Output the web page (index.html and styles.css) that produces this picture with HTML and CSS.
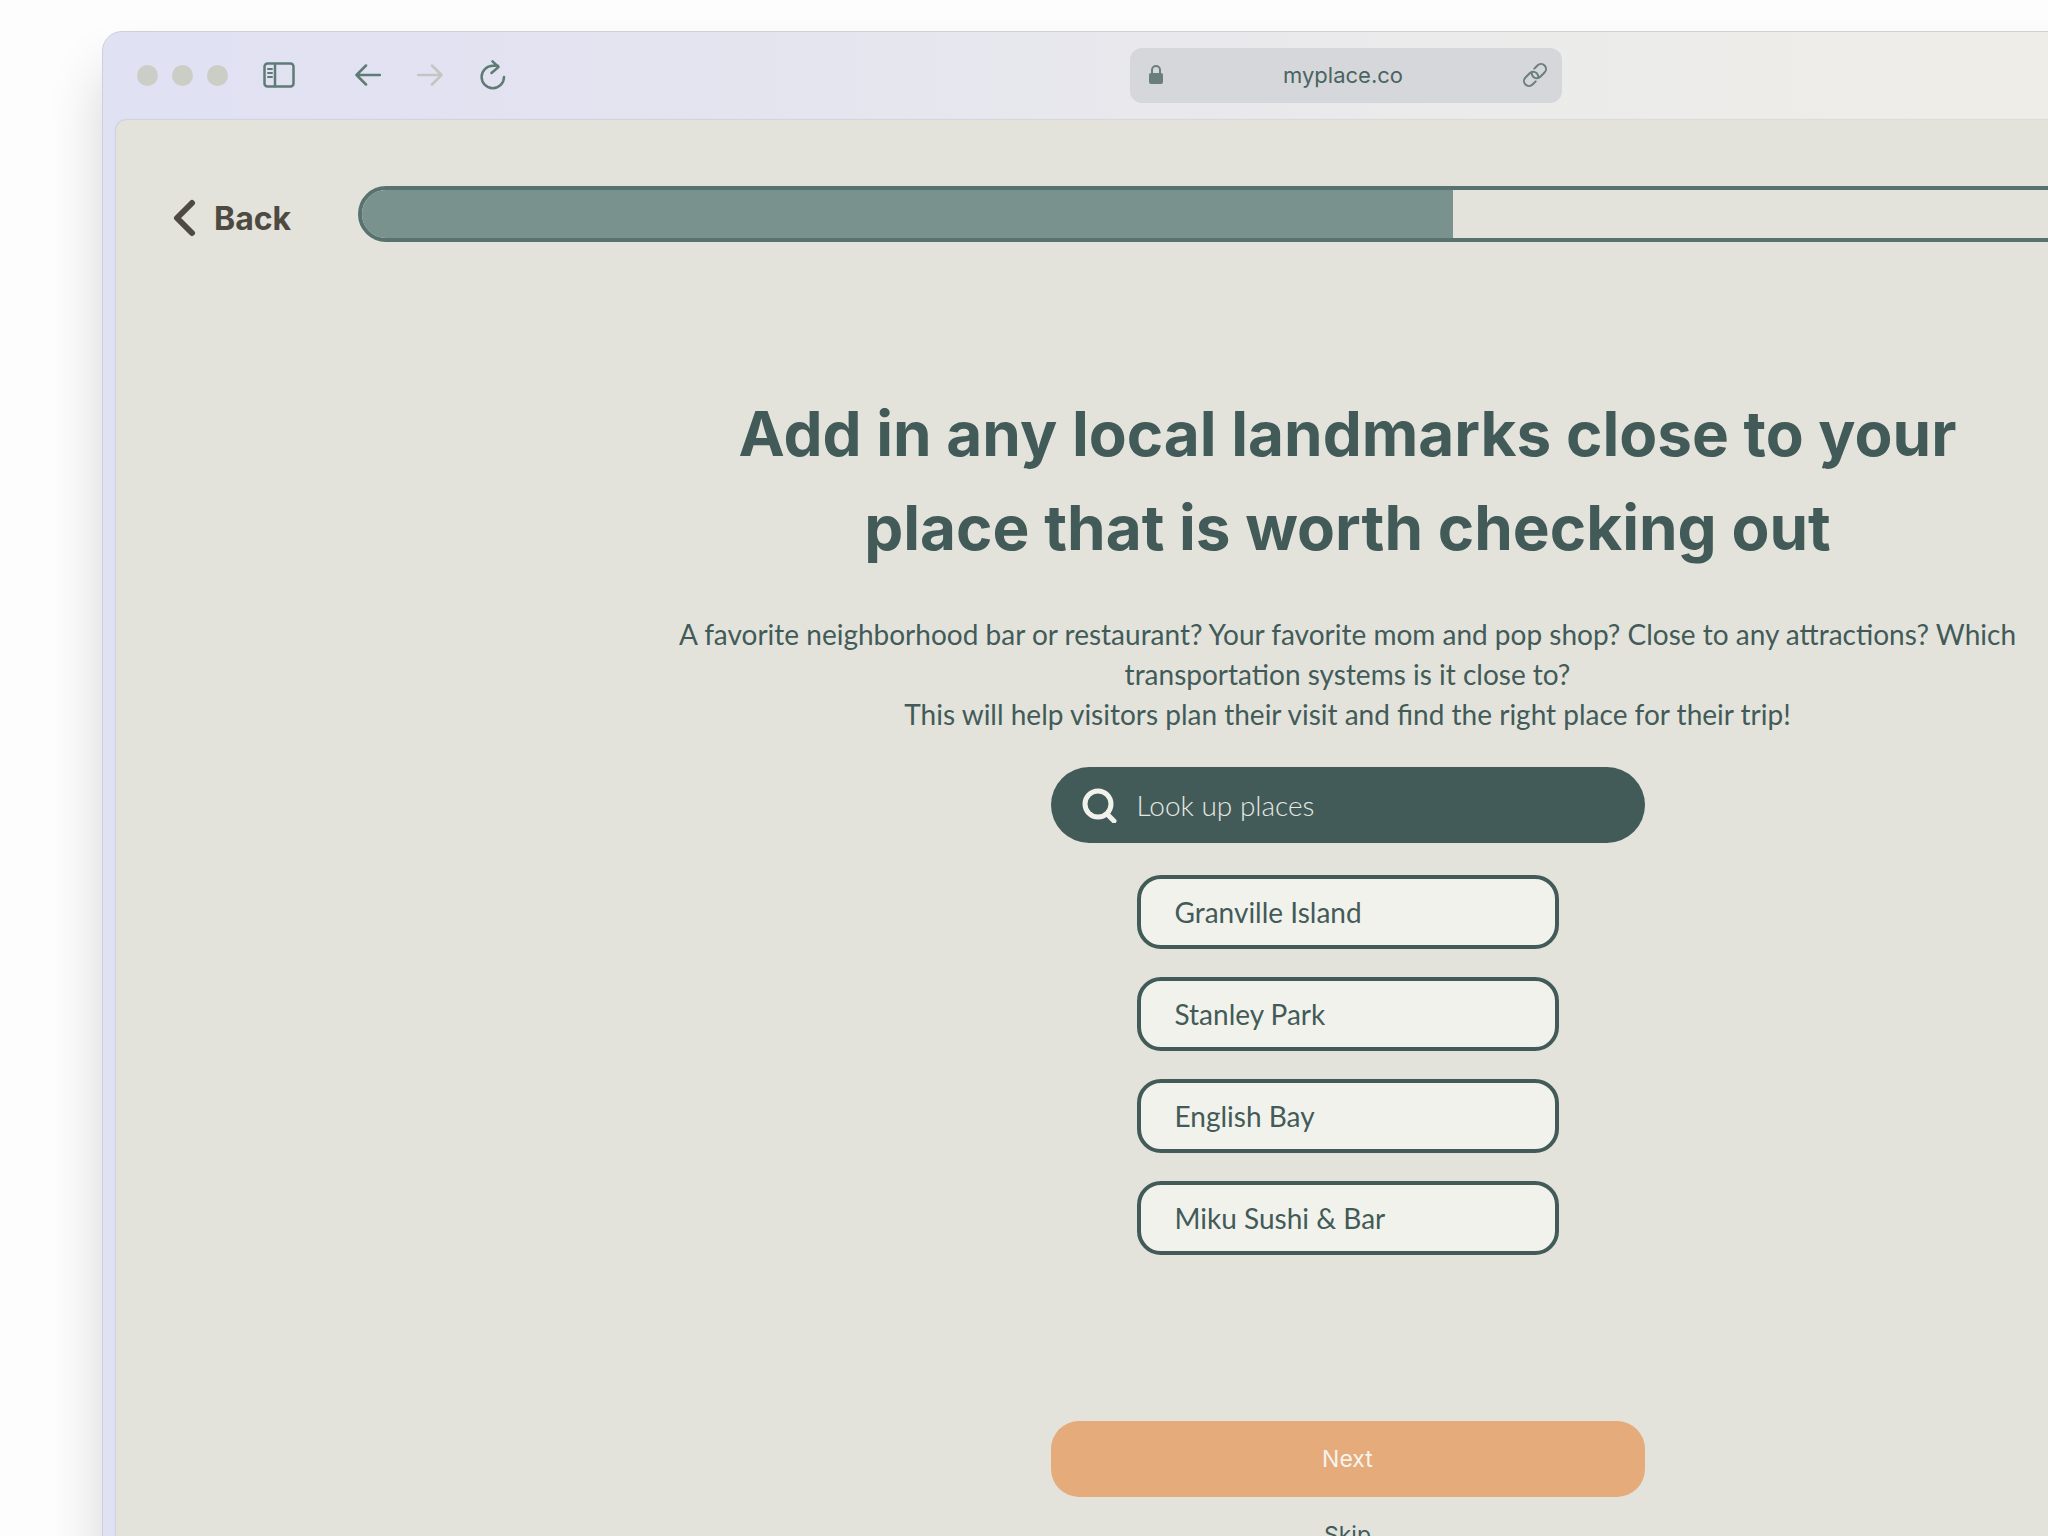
FILE: index.html
```
<!DOCTYPE html>
<html lang="en">
<head>
    <meta charset="UTF-8">
    <meta name="viewport" content="width=device-width, initial-scale=1.0">
    <title>MyPlace - Local landmarks</title>
    <link rel="stylesheet" href="styles.css">
</head>
<body>
    <div class="browser">
        <!-- Browser toolbar -->
        <header class="toolbar">
            <div class="toolbar-left">
                <div class="dots">
                    <span class="dot"></span>
                    <span class="dot"></span>
                    <span class="dot"></span>
                </div>
                <button class="tool-btn sidebar-btn" aria-label="Toggle sidebar">
                    <svg width="32" height="26" viewBox="0 0 32 26" stroke-width="2.5">
                        <rect x="1.500" y="1.500" width="29" height="23" rx="3"/>
                        <path d="M12 2v22"/>
                        <path d="M5 7h4M5 11h4M5 15h4" stroke-width="2"/>
                    </svg>
                </button>
                <button class="tool-btn prev-btn" aria-label="Go back">
                    <svg width="26" height="22" viewBox="0 0 26 22" stroke-width="2.5">
                        <path d="M25 11H1.500M11 1.500L1.500 11l9.500 9.500"/>
                    </svg>
                </button>
                <button class="tool-btn next-page-btn" aria-label="Go forward" disabled>
                    <svg width="26" height="22" viewBox="0 0 26 22" stroke-width="2.5">
                        <path d="M1 11h23.500M15 1.500l9.500 9.500-9.500 9.500"/>
                    </svg>
                </button>
                <button class="tool-btn reload-btn" aria-label="Reload">
                    <svg width="26" height="30" viewBox="0 0 26 30" stroke-width="2.5">
                        <path d="M24 17a11.200 11.200 0 1 1-11.200-11.200H18M12.500 1.300l6 5.700-7 6"/>
                    </svg>
                </button>
            </div>
            <div class="url-bar">
                <svg class="lock" width="14" height="20" viewBox="0 0 14 20">
                    <rect x="0" y="8" width="14" height="11" rx="2" fill="currentColor"/>
                    <path d="M3 9V5a4 4 0 0 1 8 0v4" fill="none" stroke="currentColor" stroke-width="2"/>
                </svg>
                <input class="url-input" type="text" value="myplace.co" aria-label="Address">
                <svg class="link" width="22" height="22" viewBox="0 0 22 22">
                    <g transform="rotate(-45 11 11)">
                        <path d="M7 16H2.500a5 5 0 0 1 0-10h6a5 5 0 0 1 4.500 7.200a5 5 0 0 1-2 2.200"/>
                        <path d="M15 6h4.500a5 5 0 0 1 0 10h-6a5 5 0 0 1-4.500-7.200a5 5 0 0 1 2-2.200"/>
                    </g>
                </svg>
            </div>
        </header>

        <main class="page">
            <div class="top-row">
                <button class="back-btn">
                    <svg width="24" height="38" viewBox="0 0 24 38">
                        <path d="M20 4L5 19l15 15"/>
                    </svg>
                    Back
                </button>
                <progress class="progress" value="50" max="100" aria-label="Setup progress"></progress>
            </div>

            <h1>Add in any local landmarks close to your<br>place that is worth checking out</h1>
            <p class="intro">
                A favorite neighborhood bar or restaurant? Your favorite mom and pop shop? Close to any attractions? Which<br>
                transportation systems is it close to?<br>
                This will help visitors plan their visit and find the right place for their trip!
            </p>

            <form class="landmarks">
                <label class="search">
                    <svg width="36" height="36" viewBox="0 0 36 36">
                        <circle cx="17" cy="17" r="13"/>
                        <path d="M26 27l7 7"/>
                    </svg>
                    <input type="text" placeholder="Look up places" aria-label="Look up places">
                </label>
                <div class="places">
                    <button type="button" class="place">Granville Island</button>
                    <button type="button" class="place">Stanley Park</button>
                    <button type="button" class="place">English Bay</button>
                    <button type="button" class="place">Miku Sushi &amp; Bar</button>
                </div>
                <button type="button" class="next-btn">Next</button>
                <a class="skip" href="#">Skip</a>
            </form>
        </main>
    </div>
</body>
</html>
```
FILE: styles.css
```
* {
    box-sizing: border-box;
}
body {
    margin: 0;
    height: 100vh;
    overflow: hidden;
    display: flex;
    background: #fdfdfd;
    font-family: Lato, "Open Sans", sans-serif;
    color: #425b58;
}
button, input {
    font-family: inherit;
    color: inherit;
}
button {
    cursor: pointer;
}
h1, .back-btn, .url-input, .next-btn, .skip {
    font-family: Inter, "Liberation Sans", sans-serif;
}

/* The window runs off the right and bottom edges */
.browser {
    flex: 1;
    margin: 31px -532px -60px 102px;
    padding-left: 13px;
    border: 1px solid #cfd0d2;
    border-radius: 20px;
    background: linear-gradient(90deg, #e0e1f3 0, #e2e2f1 16%, #ebebeb 55%, #eeede8 75%);
    box-shadow: 0 40px 56px rgba(0, 0, 0, 0.16);
    display: flex;
    flex-direction: column;
}

/* Toolbar */
.toolbar {
    height: 88px;
    display: grid;
    grid-template-columns: 1fr 432px 1fr;
    align-items: center;
    padding: 0 4px 2px 0;
}
.toolbar-left {
    display: flex;
    align-items: center;
    padding-left: 21px;
}
.dots {
    display: flex;
    gap: 14px;
}
.dot {
    width: 21px;
    height: 21px;
    border-radius: 50%;
    background: #cbcdc7;
}
.tool-btn {
    display: flex;
    padding: 0;
    border: none;
    background: none;
    color: #5f7b75;
}
.tool-btn svg {
    fill: none;
    stroke: currentColor;
    stroke-linecap: round;
    stroke-linejoin: round;
}
.tool-btn:disabled {
    color: #c3c5c1;
}
.sidebar-btn {
    margin-left: 35px;
}
.prev-btn {
    margin-left: 60px;
}
.next-page-btn {
    margin-left: 36px;
}
.reload-btn {
    margin-left: 37px;
}
.url-bar {
    height: 55px;
    display: flex;
    align-items: center;
    padding: 0 16px 0 19px;
    border-radius: 12px;
    background: #d6d7da;
    color: #6a7f79;
}
.url-input {
    flex: 1;
    min-width: 0;
    padding: 0;
    border: none;
    outline: none;
    background: none;
    text-align: center;
    font-size: 22px;
    color: #4a645f;
}
.link {
    overflow: visible;
    fill: none;
    stroke: currentColor;
    stroke-width: 2;
    stroke-linecap: round;
}

/* Page */
.page {
    flex: 1;
    padding-top: 66px;
    border-radius: 10px 0 0 0;
    background: #e3e3dc;
    box-shadow: 0 0 2px rgba(0, 0, 0, 0.25);
    text-align: center;
}
.top-row {
    display: flex;
    align-items: center;
    padding: 0 32px 0 56px;
}
.back-btn {
    display: flex;
    align-items: center;
    gap: 18px;
    width: 186px;
    padding: 8px 0 0;
    border: none;
    background: none;
    font-size: 32px;
    font-weight: 700;
    color: #4f4a41;
}
.back-btn svg {
    fill: none;
    stroke: currentColor;
    stroke-width: 6;
    stroke-linecap: round;
    stroke-linejoin: round;
}
.progress {
    flex: 1;
    height: 56px;
    appearance: none;
    border: 4px solid #587270;
    border-radius: 28px;
    overflow: hidden;
    background: none;
}
.progress::-webkit-progress-bar {
    background: none;
}
.progress::-webkit-progress-value {
    background: #7a928e;
}
h1 {
    margin: 145px 0 0;
    font-size: 62px;
    line-height: 94px;
    font-weight: 700;
}
.intro {
    margin: 39px 0 33px;
    font-size: 28px;
    line-height: 40px;
}

/* Search and places */
.landmarks {
    display: flex;
    flex-direction: column;
    align-items: center;
}
.search {
    display: flex;
    align-items: center;
    gap: 20px;
    width: 594px;
    height: 76px;
    padding: 0 30px;
    border-radius: 38px;
    background: #425b58;
    color: #f2f2ec;
}
.search svg {
    fill: none;
    stroke: currentColor;
    stroke-width: 5;
    stroke-linecap: round;
}
.search input {
    flex: 1;
    min-width: 0;
    padding: 0;
    border: none;
    outline: none;
    background: none;
    font-size: 28px;
    font-weight: 300;
}
.search input::placeholder {
    color: #e6e8e3;
}
.places {
    display: flex;
    flex-direction: column;
    gap: 28px;
    width: 422px;
    margin: 32px 0 166px;
}
.place {
    height: 74px;
    padding: 0 34px;
    border: 4px solid #425b58;
    border-radius: 24px;
    background: #f2f2ec;
    font-size: 28px;
    text-align: left;
}
.next-btn {
    width: 594px;
    height: 76px;
    border: none;
    border-radius: 28px;
    background: #e5ab7b;
    color: #f7f4ec;
    font-size: 23px;
}
.skip {
    margin-top: 22px;
    font-size: 23px;
    line-height: 32px;
    color: inherit;
    text-decoration: none;
}
```
